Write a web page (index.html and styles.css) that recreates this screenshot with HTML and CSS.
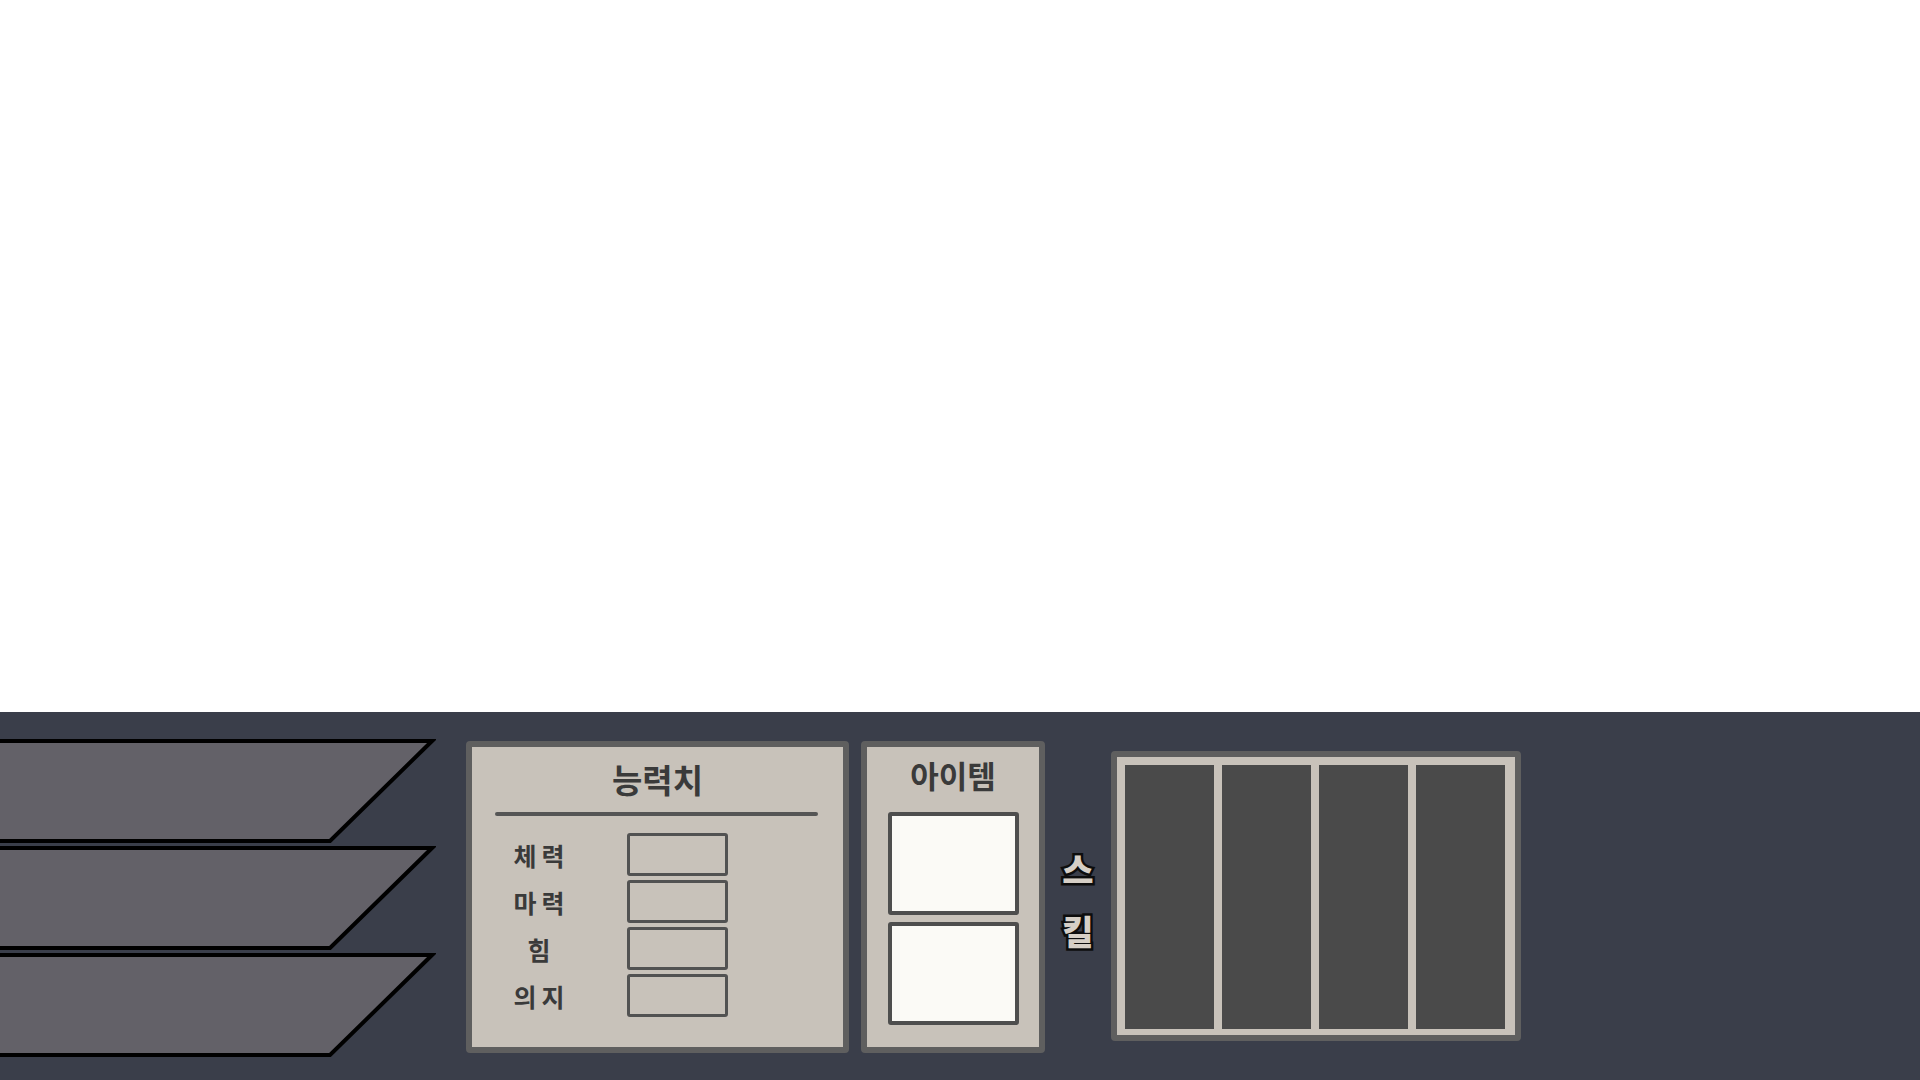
FILE: index.html
```html
<!DOCTYPE html>
<html lang="ko">
<head>
  <meta charset="UTF-8">
  <title>게임 화면</title>
  <meta name="viewport" content="width=device-width, initial-scale=1.0"/>
  <link rel="stylesheet" href="styles.css">
</head>
<body>
  <div class="stage"></div>

  <div class="hud">
    <div class="tabs">
      <svg class="tab" width="436" height="104" viewBox="0 0 436 104">
        <polygon points="-4,2 432,2 330,102 -4,102" />
      </svg>
      <svg class="tab" width="436" height="104" viewBox="0 0 436 104">
        <polygon points="-4,2 432,2 330,102 -4,102" />
      </svg>
      <svg class="tab" width="436" height="104" viewBox="0 0 436 104">
        <polygon points="-4,2 432,2 330,102 -4,102" />
      </svg>
    </div>

    <div class="panel stats">
      <h3 class="panel-title">능력치</h3>
      <div class="rule"></div>
      <div class="stat-list">
        <span class="stat-name">체력</span><div class="stat-box"></div>
        <span class="stat-name">마력</span><div class="stat-box"></div>
        <span class="stat-name">힘</span><div class="stat-box"></div>
        <span class="stat-name">의지</span><div class="stat-box"></div>
      </div>
    </div>

    <div class="panel items">
      <h3 class="panel-title">아이템</h3>
      <div class="item-slot"></div>
      <div class="item-slot"></div>
    </div>

    <div class="skill-label">
      <span>스</span>
      <span>킬</span>
    </div>

    <div class="panel skills">
      <div class="skill-slot"></div>
      <div class="skill-slot"></div>
      <div class="skill-slot"></div>
      <div class="skill-slot"></div>
    </div>
  </div>
</body>
</html>
```

FILE: styles.css
```css
body {
  margin: 0;
  font-family: "Noto Sans CJK KR", "Noto Sans", sans-serif;
  background: #ffffff;
  overflow: hidden;
}
.stage {
  height: 712px;
  background: #ffffff;
}
.hud {
  height: 368px;
  background: #3a3e4a;
  display: flex;
  align-items: flex-start;
  padding-top: 27px;
  box-sizing: border-box;
}
.tabs {
  display: flex;
  flex-direction: column;
  gap: 3px;
  width: 436px;
  margin-right: 30px;
}
.tab {
  display: block;
}
.tab polygon {
  fill: #636168;
  stroke: #000;
  stroke-width: 4;
  stroke-linejoin: miter;
}
.panel {
  box-sizing: border-box;
  border: 6px solid #5f5f5f;
  border-radius: 4px;
  background: #c8c2ba;
}
.panel-title {
  margin: 0;
  text-align: center;
  font-weight: 700;
  color: #3a3a3a;
}
.stats {
  width: 383px;
  height: 312px;
  margin-top: 2px;
  margin-right: 12px;
}
.stats .panel-title {
  font-size: 33px;
  line-height: 40px;
  margin-top: 12px;
}
.rule {
  height: 4px;
  background: #555;
  margin: 13px 25px 0 23px;
  border-radius: 2px;
}
.stat-list {
  display: grid;
  grid-template-columns: 62px 101px;
  grid-auto-rows: 43px;
  column-gap: 57px;
  row-gap: 4px;
  padding-left: 36px;
  margin-top: 17px;
  align-items: center;
}
.stat-name {
  text-align: center;
  font-size: 25px;
  font-weight: 700;
  letter-spacing: 5px;
  margin-right: -5px;
  color: #3a3a3a;
}
.stat-box {
  box-sizing: border-box;
  height: 43px;
  border: 3px solid #525252;
  border-radius: 3px;
}
.items {
  width: 184px;
  height: 312px;
  margin-top: 2px;
  display: flex;
  flex-direction: column;
  align-items: center;
}
.items .panel-title {
  font-size: 31px;
  line-height: 38px;
  margin-top: 9px;
  margin-bottom: 18px;
}
.item-slot {
  box-sizing: border-box;
  width: 131px;
  height: 103px;
  background: #fbfaf6;
  border: 4px solid #4e4e4e;
  border-radius: 3px;
  margin-bottom: 7px;
}
.skill-label {
  width: 66px;
  display: flex;
  flex-direction: column;
  align-items: center;
  gap: 18px;
  margin-top: 108px;
}
.skill-label span {
  font-size: 34px;
  line-height: 44px;
  font-weight: 900;
  color: #d6cfc6;
  -webkit-text-stroke: 5px #0d0d0d;
  paint-order: stroke fill;
}
.skills {
  width: 410px;
  height: 290px;
  margin-top: 12px;
  display: flex;
  gap: 8px;
  padding: 8px 10px 6px 8px;
}
.skill-slot {
  flex: 1;
  background: #4a4a4a;
}
```
